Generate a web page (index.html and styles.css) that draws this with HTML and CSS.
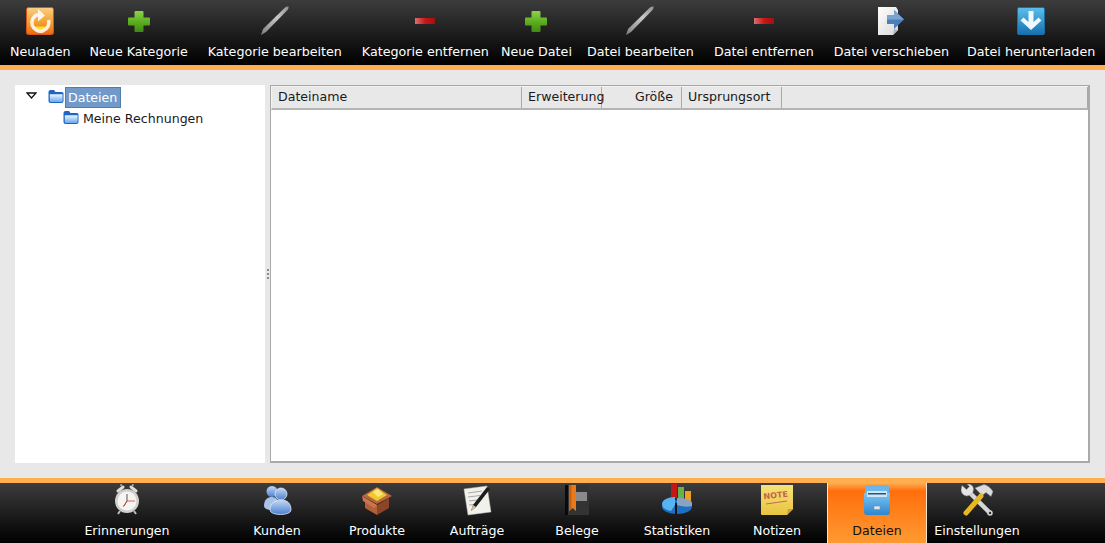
FILE: index.html
```html
<!DOCTYPE html>
<html lang="de">
<head>
    <meta charset="UTF-8" />
    <title>Dateien</title>
    <link rel="stylesheet" href="styles.css">
</head>
<body>
    <svg class="defs" width="0" height="0" aria-hidden="true">
        <defs>
            <linearGradient id="g-orange" x1="0" y1="0" x2="0" y2="1"><stop offset="0" stop-color="#f9cf86"/><stop offset="0.55" stop-color="#f5a030"/><stop offset="1" stop-color="#ea6a10"/></linearGradient>
            <linearGradient id="g-green" x1="0" y1="0" x2="0" y2="1"><stop offset="0" stop-color="#8fd24a"/><stop offset="0.5" stop-color="#5fae22"/><stop offset="1" stop-color="#3f8a12"/></linearGradient>
            <linearGradient id="g-red" x1="0" y1="0" x2="1" y2="0"><stop offset="0" stop-color="#d97070"/><stop offset="0.5" stop-color="#c81818"/><stop offset="1" stop-color="#a01010"/></linearGradient>
            <linearGradient id="g-pen" x1="0" y1="1" x2="1" y2="0"><stop offset="0" stop-color="#7d7d7d"/><stop offset="0.6" stop-color="#c8c8c8"/><stop offset="1" stop-color="#909090"/></linearGradient>
            <linearGradient id="g-blue" x1="0" y1="0" x2="0" y2="1"><stop offset="0" stop-color="#5cc0ec"/><stop offset="1" stop-color="#1670b0"/></linearGradient>
            <linearGradient id="g-folder" x1="0" y1="0" x2="0" y2="1"><stop offset="0" stop-color="#eef6ff"/><stop offset="1" stop-color="#6aa8ee"/></linearGradient>
            <linearGradient id="g-cab" x1="0" y1="0" x2="0" y2="1"><stop offset="0" stop-color="#7cc6f2"/><stop offset="1" stop-color="#2f86d0"/></linearGradient>
            <linearGradient id="g-page" x1="0" y1="0" x2="1" y2="1"><stop offset="0" stop-color="#ffffff"/><stop offset="1" stop-color="#d8d8d8"/></linearGradient>
            <linearGradient id="g-man" x1="0" y1="0" x2="0" y2="1"><stop offset="0" stop-color="#c4d8f4"/><stop offset="1" stop-color="#4a7fd0"/></linearGradient>
            <linearGradient id="g-note" x1="0" y1="0" x2="0" y2="1"><stop offset="0" stop-color="#f6e27a"/><stop offset="1" stop-color="#e8c440"/></linearGradient>
            <symbol id="i-plus" viewBox="0 0 32 32">
                <path d="M12.500 6h7a1 1 0 0 1 1 1v5.500h5.500a1 1 0 0 1 1 1v6a1 1 0 0 1-1 1h-5.500v5.500a1 1 0 0 1-1 1h-7a1 1 0 0 1-1-1v-5.500h-5.500a1 1 0 0 1-1-1v-6a1 1 0 0 1 1-1h5.500v-5.500a1 1 0 0 1 1-1z" fill="url(#g-green)"/>
            </symbol>
            <symbol id="i-minus" viewBox="0 0 32 32">
                <rect x="6" y="13" width="20" height="6" fill="url(#g-red)"/>
            </symbol>
            <symbol id="i-pen" viewBox="0 0 32 32">
                <path d="M2 30l2-6L26 2.500q2-1.500 3.500-1 .5 1.500-1 3.500L7 27z" fill="url(#g-pen)"/>
            </symbol>
            <symbol id="i-folder" viewBox="0 0 16 15">
                <path d="M0.500 3q0-2 2-2h3.500l1.500 2h6.500q1.500 0 1.500 1.500V12q0 2-2 2H2.500q-2 0-2-2z" fill="#1f66c4"/>
                <path d="M1.800 5.300h12.800v6.700q0 .9-.9.9H2.700q-.9 0-.9-.9z" fill="url(#g-folder)"/>
            </symbol>
        </defs>
    </svg>

    <div class="toolbar">
        <div class="tool tool-first">
            <svg class="icon" viewBox="0 0 32 32"><rect x="2.500" y="2.500" width="27" height="27" rx="2" fill="url(#g-orange)" stroke="#d8541a"/><path d="M10 21.500a7 7 0 0 0 12 0z" fill="#f6e22a"/><path d="M14 9.500A8.500 8.500 0 1 0 24.500 15" fill="none" stroke="#fff" stroke-opacity=".85" stroke-width="3.500"/><path d="M14 4l7 6.500-7 6z" fill="#fff" fill-opacity=".85"/></svg>
            <span>Neuladen</span>
        </div>
        <div class="tool"><svg class="icon"><use href="#i-plus"/></svg><span>Neue Kategorie</span></div>
        <div class="tool"><svg class="icon"><use href="#i-pen"/></svg><span>Kategorie bearbeiten</span></div>
        <div class="tool tight-right"><svg class="icon"><use href="#i-minus"/></svg><span>Kategorie entfernen</span></div>
        <div class="tool tight-both"><svg class="icon"><use href="#i-plus"/></svg><span>Neue Datei</span></div>
        <div class="tool"><svg class="icon"><use href="#i-pen"/></svg><span>Datei bearbeiten</span></div>
        <div class="tool"><svg class="icon"><use href="#i-minus"/></svg><span>Datei entfernen</span></div>
        <div class="tool tool-move">
            <svg class="icon" viewBox="0 0 32 32"><path d="M3 2h18l2 3v20l-5 5H3z" fill="url(#g-page)"/><path d="M18 30l1-6 4 1z" fill="#b5b5b5"/><path d="M12 10h7V5l10 9.500L19 24v-5h-7z" fill="#4a7fb8"/><path d="M12 10h7V5l10 9.500H12z" fill="#7aa3cf"/></svg>
            <span>Datei verschieben</span>
        </div>
        <div class="tool">
            <svg class="icon" viewBox="0 0 32 32"><rect x="2.500" y="2.500" width="27" height="27" rx="1.500" fill="url(#g-blue)" stroke="#1a6ea8"/><path d="M13.500 6h5v11l5-4.500 3 3L16 25 5.500 15.500l3-3 5 4.500z" fill="#eef8fd"/></svg>
            <span>Datei herunterladen</span>
        </div>
    </div>

    <div class="main">
        <div class="tree">
            <div class="tree-row">
                <svg class="arrow" viewBox="0 0 11 7"><path d="M1 1h9L5.500 6z" fill="#fff" stroke="#111" stroke-width="1.300"/></svg>
                <svg class="folder"><use href="#i-folder"/></svg>
                <span class="tree-label selected">Dateien</span>
            </div>
            <div class="tree-row child">
                <svg class="folder"><use href="#i-folder"/></svg>
                <span class="tree-label">Meine Rechnungen</span>
            </div>
        </div>
        <div class="splitter"><i></i><i></i><i></i></div>
        <div class="files">
            <div class="files-head">
                <div class="col col-name">Dateiname</div>
                <div class="col col-ext">Erweiterung</div>
                <div class="col col-size">Größe</div>
                <div class="col col-origin">Ursprungsort</div>
                <div class="col-rest"></div>
            </div>
        </div>
    </div>

    <div class="tabbar">
        <div class="tab tab-first">
            <svg class="icon" viewBox="0 0 32 32"><path d="M7 7l5-4 M25 7l-5-4" stroke="#ddd" stroke-width="3" stroke-linecap="round"/><path d="M10 2a3 3 0 0 1 12 0" fill="none" stroke="#aaa" stroke-width="1.500"/><path d="M9 27l-2 3 M23 27l2 3" stroke="#bbb" stroke-width="2"/><circle cx="16" cy="17" r="12" fill="#cfcfcf"/><circle cx="16" cy="17" r="9.500" fill="#f4f4f0"/><path d="M16 17V10 M16 17l-3 5" stroke="#555" stroke-width="1"/><path d="M16 17h8 M16 17l-4 6" stroke="#d84040" stroke-width=".8"/></svg>
            <span>Erinnerungen</span>
        </div>
        <div class="tab">
            <svg class="icon" viewBox="0 0 32 32"><circle cx="11" cy="7.500" r="5.500" fill="url(#g-man)"/><path d="M3 22c0-7 4-9 8-9s7 3 7 9-15 5-15 0z" fill="#a9c2e6"/><circle cx="20" cy="10" r="6" fill="url(#g-man)" stroke="#dde8f8" stroke-width=".8"/><path d="M9 26c0-7 5-10 11-10s10 3 10 10c0 6-21 6-21 0z" fill="url(#g-man)" stroke="#dde8f8" stroke-width=".8"/></svg>
            <span>Kunden</span>
        </div>
        <div class="tab">
            <svg class="icon" viewBox="0 0 32 32"><path d="M1 12l15-9 15 9-15 8z" fill="#b8663c"/><path d="M6 11l10-7 10 7-10 6z" fill="#f0c830"/><path d="M12 8l5-3 5 5-5 3z" fill="#f9e87a"/><path d="M4 14l12 7v10L4 24z" fill="#b45f3a"/><path d="M28 14l-12 7v10l12-7z" fill="#8d4528"/><path d="M1 12l3 2 12 7-3 3-11-7z" fill="#c9764c"/></svg>
            <span>Produkte</span>
        </div>
        <div class="tab">
            <svg class="icon" viewBox="0 0 32 32"><path d="M3 5l23-3 4 26-23 3z" fill="#f1f1ec" stroke="#bbb" stroke-width=".5"/><path d="M7 9l14-2 M7 13l12-1.500 M8 17l8-1 M8 21l5-.5" stroke="#a8a8a8"/><path d="M10 27l2-6L26 3l3 2-14 18z" fill="#1c1c1c"/><path d="M10 27l2-6 3 2z" fill="#d8c090"/></svg>
            <span>Aufträge</span>
        </div>
        <div class="tab">
            <svg class="icon" viewBox="0 0 32 32"><rect x="4" y="1" width="24" height="30" fill="#333"/><rect x="4" y="1" width="3" height="30" fill="#0a0a0a"/><rect x="15" y="8" width="11" height="9" fill="#8a8a8a"/><path d="M8 1h7v26l-3.500-3L8 27z" fill="#e87a1c"/><path d="M8 1h2.500v24.500L8 27z" fill="#c86010"/></svg>
            <span>Belege</span>
        </div>
        <div class="tab">
            <svg class="icon" viewBox="0 0 32 32"><rect x="10" y="0" width="6" height="14" fill="#c21818"/><rect x="17" y="3" width="6" height="13" fill="#6ab04a"/><rect x="24" y="7" width="6" height="10" fill="#f0a020"/><ellipse cx="16" cy="23" rx="15" ry="7" fill="#1d6fc4"/><path d="M1 20c0-4 6-7 13-7v8l-4 6c-5-1-9-3-9-7z" fill="#58b4f0"/><path d="M16 14c8 0 15 2 15 5v3c-3 1-9 1-15-1z" fill="#88a4c0"/><rect x="14" y="19" width="2" height="11" fill="#111"/></svg>
            <span>Statistiken</span>
        </div>
        <div class="tab">
            <svg class="icon" viewBox="0 0 32 32"><path d="M0 1h32v24l-6 6H1q-1 0-1-1z" fill="url(#g-note)"/><path d="M32 25l-6 6 1-6z" fill="#c8a030"/><text class="note-text" x="15" y="14" text-anchor="middle" transform="rotate(-6 15 14)">NOTE</text><path d="M5 20l21-3" stroke="#c86a50" stroke-width="1"/></svg>
            <span>Notizen</span>
        </div>
        <div class="tab active">
            <svg class="icon" viewBox="0 0 32 32"><path d="M4 4q0-3 3-3h18q3 0 3 3v6H4z" fill="#6ab6ea"/><path d="M3 9h26v19q0 3-3 3H6q-3 0-3-3z" fill="url(#g-cab)"/><path d="M6 7h20v6H6z" fill="#cfe6f6"/><path d="M7 9h18v1.500H7z" fill="#24547a"/><rect x="13" y="22" width="6" height="3.500" fill="#dfe6ec" stroke="#6a8aa4" stroke-width=".5"/></svg>
            <span>Dateien</span>
        </div>
        <div class="tab">
            <svg class="icon" viewBox="0 0 32 32"><path d="M8 8l21 21" stroke="#d6d6d6" stroke-width="4.500"/><path d="M1 1.500l4.500 4 3-3-2.500-2.500q6 0 6.500 5 0 4-3 6l-4 1q-5-1-5.500-6z" fill="#e4e4e4" stroke="#8c8c8c" stroke-width=".5"/><circle cx="29" cy="29" r="2" fill="#333" stroke="#d6d6d6" stroke-width="1.500"/><path d="M14 4l9-3.500q5 1 9 7l-2 5-5-4-4 3z" fill="#dcdcdc" stroke="#888" stroke-width=".5"/><path d="M20 12L5 29" stroke="#e8b820" stroke-width="5" stroke-linecap="round"/></svg>
            <span>Einstellungen</span>
        </div>
    </div>
</body>
</html>
```

FILE: styles.css
```css
* {
    box-sizing: border-box;
}

html, body {
    height: 100%;
}

body {
    margin: 0;
    background-color: #e8e8e8;
    font-family: "DejaVu Sans", sans-serif;
    font-size: 12.6px;
    color: #1a1a1a;
    display: flex;
    flex-direction: column;
    overflow: hidden;
}

.defs {
    position: absolute;
}

.icon {
    display: block;
    width: 32px;
    height: 32px;
}

/* top buttons */
.toolbar {
    height: 70px;
    flex-shrink: 0;
    display: flex;
    background: linear-gradient(#3c3c3c, #000000 65px);
    border-bottom: 5px solid #ffae50;
    color: #ffffff;
    font-size: 12.7px;
}

.tool {
    display: flex;
    flex-direction: column;
    align-items: center;
    padding: 5px 10px 0;
    white-space: nowrap;
}

.tool span {
    margin-top: 7px;
}

.tool-first {
    padding-right: 9px;
}

.tight-right {
    padding-right: 5px;
}

.tight-both {
    padding-left: 7px;
    padding-right: 5px;
}

.tool-move {
    padding-right: 8px;
}

/* tree and file list */
.main {
    flex: 1;
    display: flex;
    padding: 15px;
    min-height: 0;
}

.tree {
    width: 250px;
    padding-top: 2px;
    background: #ffffff;
}

.tree-row {
    height: 21px;
    display: flex;
    align-items: center;
    padding-left: 11px;
}

.tree-row.child {
    padding-left: 48px;
}

.arrow {
    width: 11px;
    height: 7px;
    margin-right: 11px;
    margin-top: -4px;
}

.folder {
    width: 16px;
    height: 15px;
    margin-top: -2px;
}

.tree-label {
    padding: 0 3px;
    margin-left: 1px;
    line-height: 19px;
}

.selected {
    background: #7199c9;
    border: 1px solid #4f7fae;
    padding: 0 3px 0 2px;
    color: #ffffff;
}

.splitter {
    width: 5px;
    display: flex;
    flex-direction: column;
    justify-content: center;
    align-items: center;
    gap: 2px;
}

.splitter i {
    width: 2px;
    height: 2px;
    background: #8c8c8c;
}

.files {
    flex: 1;
    background: #ffffff;
    border: 1px solid #a9a9a9;
    border-bottom-width: 2px;
    border-right-width: 2px;
}

.files-head {
    height: 24px;
    display: flex;
    background: #e8e8e8;
    border-top: 1px solid #f2f2f2;
    border-bottom: 2px solid #b4b4b4;
    border-left: 1px solid #f2f2f2;
    line-height: 20px;
}

.col {
    padding: 0 6px;
    border-right: 1px solid #a9a9a9;
    white-space: nowrap;
}

.col-name {
    width: 250px;
}

.col-ext {
    width: 80px;
    padding-right: 0;
}

.col-size {
    width: 80px;
    text-align: right;
    padding-right: 8px;
}

.col-origin {
    width: 100px;
}

.col-rest {
    flex: 1;
    border-right: 1px solid #a9a9a9;
}

/* bottom tabs */
.tabbar {
    height: 65px;
    flex-shrink: 0;
    display: flex;
    padding-left: 27px;
    background: linear-gradient(#3c3c3c, #000000);
    border-top: 5px solid #ffae50;
    color: #ffffff;
}

.tab {
    width: 100px;
    display: flex;
    flex-direction: column;
    align-items: center;
    padding-top: 1px;
    white-space: nowrap;
}

.tab span {
    margin-top: 7px;
}

.tab-first {
    width: 200px;
}

.tab.active {
    background: linear-gradient(#ffae50, #ff6f0c 8px, #ff9a32);
    border-left: 1px solid #f3e3d0;
    border-right: 1px solid #f3e3d0;
    color: #111111;
}

.note-text {
    font-family: "DejaVu Sans", sans-serif;
    font-size: 8px;
    font-weight: bold;
    fill: #c8604a;
}
```
